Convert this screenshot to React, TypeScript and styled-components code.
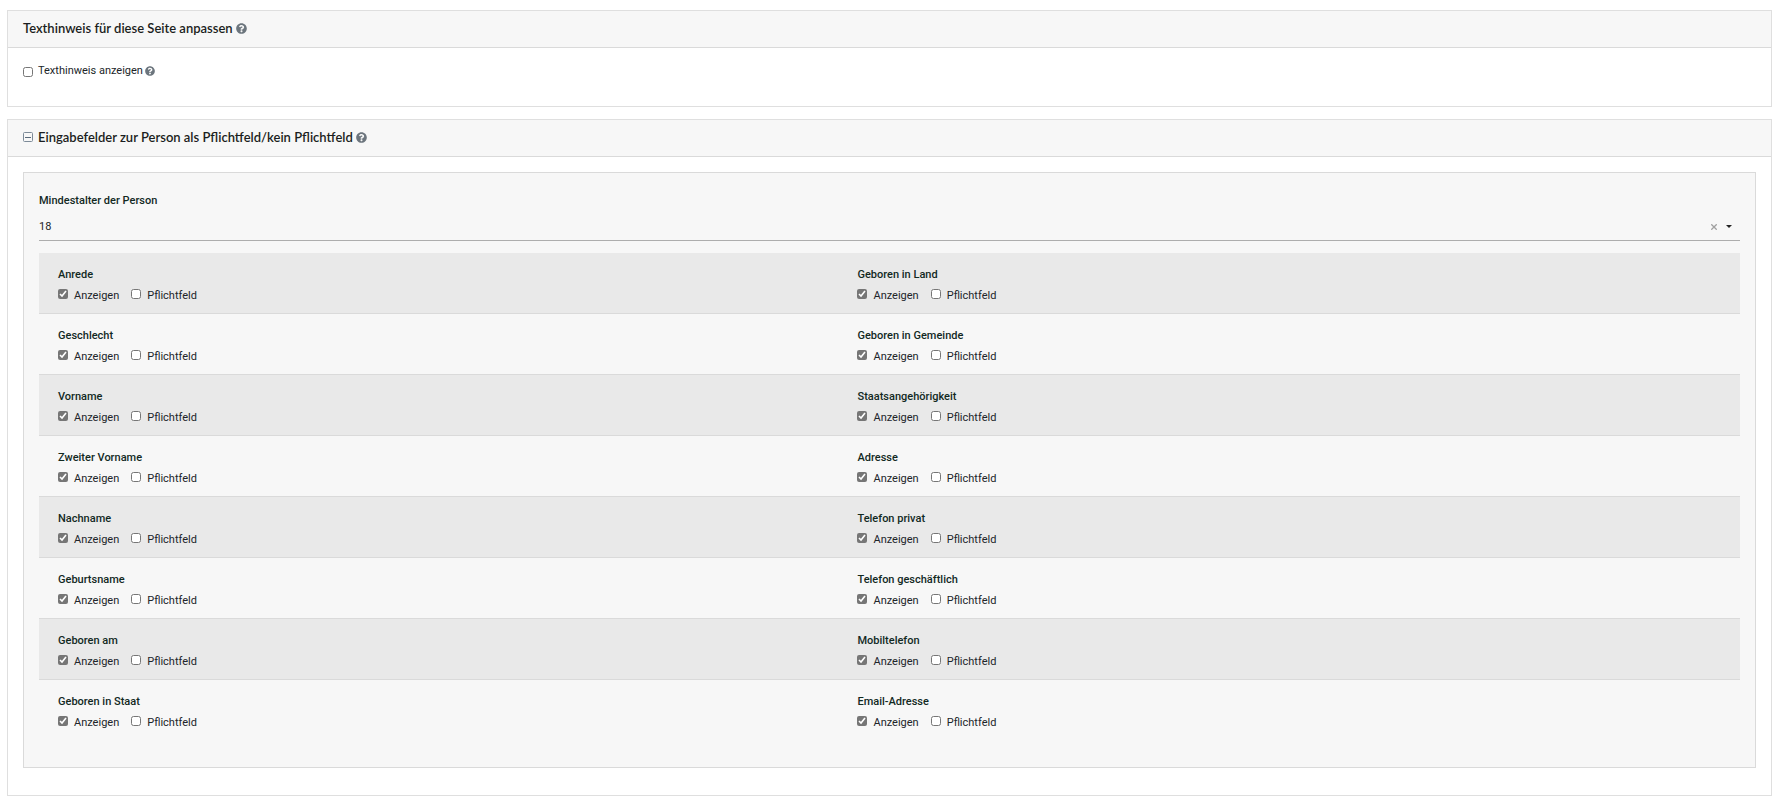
import React, { useId, useState } from 'react';
import styled, { createGlobalStyle } from 'styled-components';
import { FaQuestionCircle } from 'react-icons/fa';

const GlobalStyle = createGlobalStyle`
  *, *::before, *::after { box-sizing: border-box; }
  body {
    margin: 0;
    background: #fff;
    color: #212529;
    font: 400 11px/16px Roboto, 'Liberation Sans', sans-serif;
  }
`;

const Page = styled.main`
  display: flex;
  flex-direction: column;
  gap: 12px;
  padding: 10px 3px 7px 7px;
`;

const Card = styled.section`
  border: 1px solid #dfdfdf;
  background: #fff;
`;

const CardHeader = styled.header`
  display: flex;
  align-items: center;
  gap: 3px;
  height: 37px;
  padding: 0 15px 2px;
  border-bottom: 1px solid #dadada;
  background: #f7f7f7;
`;

const CardTitle = styled.h2`
  margin: 0;
  color: #1b1e21;
  font: 600 13px/18px Lato, 'Liberation Sans', sans-serif;
`;

const CardBody = styled.div`
  padding: 15px 15px 27px;
`;

const IconButton = styled.button<{ $color?: string }>`
  display: inline-flex;
  padding: 0;
  border: 0;
  background: none;
  color: ${(p) => p.$color ?? '#6c757d'};
  cursor: pointer;
`;

const Toggle = styled(IconButton)`
  margin-right: 2px;
`;

const HintRow = styled.div`
  display: flex;
  align-items: center;
  gap: 2px;
`;

const Checkbox = styled.input.attrs({ type: 'checkbox' })`
  width: 10px;
  height: 10px;
  margin: 0;
  accent-color: #767676;
`;

const HintCheckbox = styled(Checkbox)`
  margin: 2px 3px 0 0;
`;

const FieldsPanel = styled.div`
  padding: 20px 15px 26px;
  border: 1px solid #dadada;
  background: #f7f7f7;
`;

const FieldLabel = styled.label`
  display: block;
  color: #12291f;
  font-weight: 500;
`;

const SelectBox = styled.div`
  display: flex;
  align-items: center;
  gap: 9px;
  height: 32px;
  margin-bottom: 12px;
  padding: 4px 8px 0 0;
  border-bottom: 1px solid #adadad;
`;

const AgeSelect = styled.select`
  flex: 1;
  height: 24px;
  padding: 0;
  border: 0;
  background: none;
  color: #212529;
  font: inherit;
  appearance: none;
`;

const Rows = styled.div`
  display: flex;
  flex-direction: column;
`;

const Row = styled.div`
  display: grid;
  grid-template-columns: 47fr 53fr;
  height: 61px;
  border-bottom: 1px solid #dadada;

  &:nth-child(odd) { background: #e9e9e9; }
  &:last-child { border-bottom-color: transparent; }
`;

const FieldGroup = styled.fieldset`
  min-width: 0;
  margin: 0;
  padding: 14px 19px 0;
  border: 0;
`;

const GroupName = styled.legend`
  float: left;
  width: 100%;
  padding: 0;
  color: #12291f;
  font-weight: 500;
`;

const Options = styled.div`
  display: flex;
  clear: both;
  gap: 12px;
  padding-top: 5px;
`;

const Option = styled.label`
  display: flex;
  gap: 6px;
`;

const OptionCheckbox = styled(Checkbox)`
  margin-top: 1px;
`;

const rows: [string, string][] = [
  ['Anrede', 'Geboren in Land'],
  ['Geschlecht', 'Geboren in Gemeinde'],
  ['Vorname', 'Staatsangehörigkeit'],
  ['Zweiter Vorname', 'Adresse'],
  ['Nachname', 'Telefon privat'],
  ['Geburtsname', 'Telefon geschäftlich'],
  ['Geboren am', 'Mobiltelefon'],
  ['Geboren in Staat', 'Email-Adresse'],
];

function Help({ size }: { size: number }) {
  return (
    <IconButton type="button" aria-label="Hilfe">
      <FaQuestionCircle size={size} />
    </IconButton>
  );
}

function Field({ name }: { name: string }) {
  return (
    <FieldGroup>
      <GroupName>{name}</GroupName>
      <Options>
        <Option>
          <OptionCheckbox defaultChecked />
          Anzeigen
        </Option>
        <Option>
          <OptionCheckbox />
          Pflichtfeld
        </Option>
      </Options>
    </FieldGroup>
  );
}

export default function App() {
  const hintId = useId();
  const ageId = useId();
  const [open, setOpen] = useState(true);
  const [age, setAge] = useState('18');

  return (
    <>
      <GlobalStyle />
      <Page>
        <Card>
          <CardHeader>
            <CardTitle>Texthinweis für diese Seite anpassen</CardTitle>
            <Help size={11} />
          </CardHeader>
          <CardBody>
            <HintRow>
              <HintCheckbox id={hintId} />
              <label htmlFor={hintId}>Texthinweis anzeigen</label>
              <Help size={10} />
            </HintRow>
          </CardBody>
        </Card>

        <Card>
          <CardHeader>
            <Toggle
              type="button"
              $color="#7d8b98"
              aria-label="Bereich ein- oder ausklappen"
              aria-expanded={open}
              onClick={() => setOpen(!open)}
            >
              <svg width="10" height="10" viewBox="0 0 10 10" fill="none" stroke="currentColor">
                <rect x="0.5" y="0.5" width="9" height="9" rx="1" />
                <path d={open ? 'M2 5.5h6' : 'M2 5.5h6M5.5 2v6'} stroke="#596a7a" />
              </svg>
            </Toggle>
            <CardTitle>Eingabefelder zur Person als Pflichtfeld/kein Pflichtfeld</CardTitle>
            <Help size={11} />
          </CardHeader>
          {open && (
            <CardBody>
              <FieldsPanel>
                <FieldLabel htmlFor={ageId}>Mindestalter der Person</FieldLabel>
                <SelectBox>
                  <AgeSelect id={ageId} value={age} onChange={(e) => setAge(e.target.value)}>
                    <option value="" />
                    <option value="16">16</option>
                    <option value="18">18</option>
                    <option value="21">21</option>
                  </AgeSelect>
                  <IconButton
                    type="button"
                    $color="#a0a0a0"
                    aria-label="Auswahl löschen"
                    onClick={() => setAge('')}
                  >
                    <svg width="6" height="6" viewBox="0 0 6 6" stroke="currentColor" strokeWidth="1.3">
                      <path d="M0.3 0.3l5.4 5.4M5.7 0.3l-5.4 5.4" />
                    </svg>
                  </IconButton>
                  <svg width="6" height="3" viewBox="0 0 6 3" fill="#222" aria-hidden="true">
                    <path d="M0 0h6L3 3z" />
                  </svg>
                </SelectBox>
                <Rows>
                  {rows.map(([left, right]) => (
                    <Row key={left}>
                      <Field name={left} />
                      <Field name={right} />
                    </Row>
                  ))}
                </Rows>
              </FieldsPanel>
            </CardBody>
          )}
        </Card>
      </Page>
    </>
  );
}
